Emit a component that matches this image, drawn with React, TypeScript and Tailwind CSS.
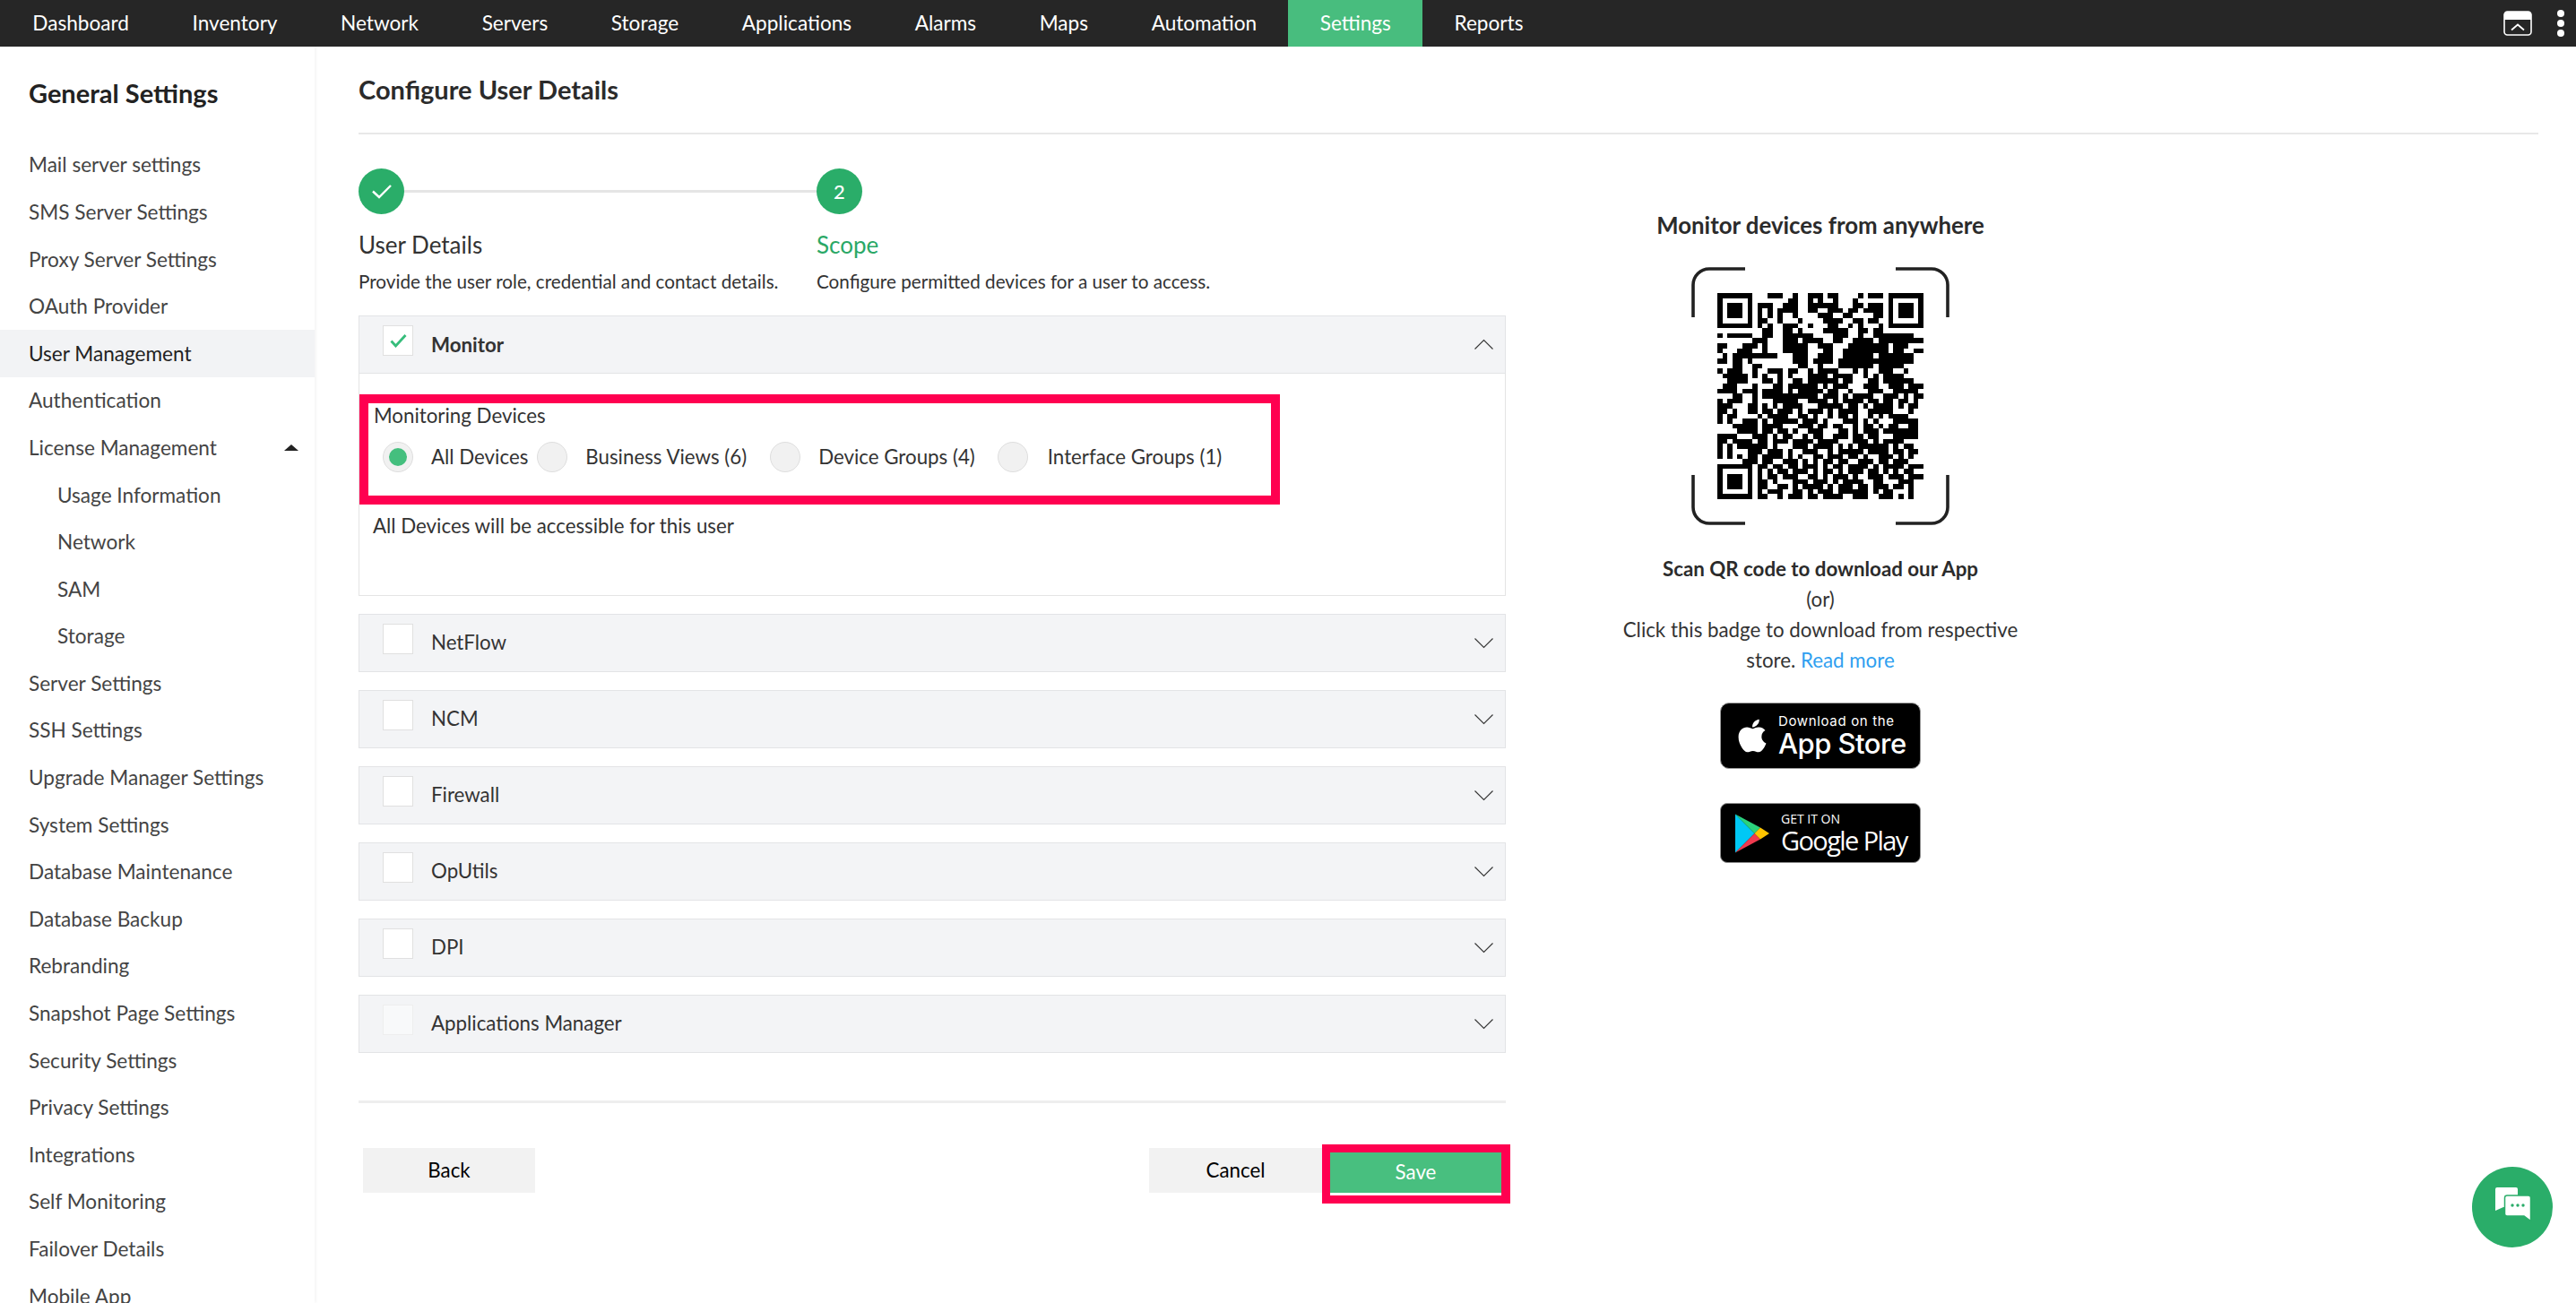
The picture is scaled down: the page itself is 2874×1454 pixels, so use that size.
import React from "react";
import { FaApple } from "react-icons/fa";

const navItems = ["Dashboard", "Inventory", "Network", "Servers", "Storage", "Applications", "Alarms", "Maps", "Automation", "Settings", "Reports"];

const sideItems: { label: string; sub?: boolean; active?: boolean; arrow?: boolean }[] = [
  { label: "Mail server settings" },
  { label: "SMS Server Settings" },
  { label: "Proxy Server Settings" },
  { label: "OAuth Provider" },
  { label: "User Management", active: true },
  { label: "Authentication" },
  { label: "License Management", arrow: true },
  { label: "Usage Information", sub: true },
  { label: "Network", sub: true },
  { label: "SAM", sub: true },
  { label: "Storage", sub: true },
  { label: "Server Settings" },
  { label: "SSH Settings" },
  { label: "Upgrade Manager Settings" },
  { label: "System Settings" },
  { label: "Database Maintenance" },
  { label: "Database Backup" },
  { label: "Rebranding" },
  { label: "Snapshot Page Settings" },
  { label: "Security Settings" },
  { label: "Privacy Settings" },
  { label: "Integrations" },
  { label: "Self Monitoring" },
  { label: "Failover Details" },
  { label: "Mobile App" },
];

const qrTop = [
  "..111..1..111.11....1.111.",
  "......11..1.1..1...1......",
  "111..111..111111...11.111.",
  "1.1.1111..11..111.11.1111.",
  "1.1.1..1....111..11....11.",
  "11..1...1....1111..11.11..",
  "1.1..111..1...11..1.1...1.",
  ".11..11.1....11111..11.11.",
];
const qrMid = [
  "1.11111..11..111111....111..1..11111111..",
  ".......111...111.1111..11..1111.111111111",
  "11...111.1...11111..111...11111111.111...",
  "1...111..1...11111...11..111111111.11..11",
  ".1.111111111...111..111..111111.1111111..",
  "11.11.1........111.1111.111111111111111..",
  "...11..11.......11..1...1111111.11111....",
  "1.111..1..111.11..1.1111...1.1..111..1...",
  ".11111.1.1..1.1...1111.1111..1.1.1111....",
  "..1111...11.1..11.111111.11...11.111111..",
  ".111...1...11.111111.1.111...111..111.111",
  "1111.111.1111.1.11111.11..1...111..11111.",
  "...11..1.11111111111.111.1.1111..111.1.11",
  "1.111..1...11111..1111.1.1111.11.11.11.1.",
  "111...11.1.1.1111...11111.11.1.1111.1.11.",
  "11.1..11.11.111.1.111.1.1111..11111...1..",
  "1.11....1.1111..11.1..1.11.1..1.1.1111...",
  "1.1..111.1.11111.111.1...111.1.1...11111.",
  "...11111.1111...111.11.11..1.11.1.11..11.",
  "....1111.11.11.1..111...11.1.111.1111111.",
  "1111...111.1.11..1.11..111.11.11...11111.",
  "11.1111.11.111.1111.1111...111.1.1111....",
  "1.1.111111.1...111.1111.1.1.111111.1.11..",
  "1.1...111.111.1..111..1.11111.1111.11.11.",
  "1.1.1.11.1111.1.1..11.111.11.1..111.1.1..",
  ".....111.11..111.1.1.11.11..111.11.111...",
];
const qrBottom = [
  "11.11.11.111.1.11.1111.1.1111.111",
  "1.1.11.111.1.11.1.111.11.1.1.11..",
  "1.11.111..11.1.111.1..111.111.111",
  "11.1...111.111.1.1111..11...111..",
  "11..11.1.1111.1.111.11.111.11.1..",
  "1.111..11.1.111.111111.1.11...1..",
  "11..1.111.11.1111..111..111.1.1..",
];

function qrPath() {
  const size = 41;
  const g: boolean[][] = Array.from({ length: size }, () => Array(size).fill(false));
  qrTop.forEach((r, y) => [...r].forEach((c, i) => { if (c === "1" && i + 8 < 33) g[y][i + 8] = true; }));
  qrMid.forEach((r, y) => [...r].forEach((c, x) => { if (c === "1" && x < size) g[y + 8][x] = true; }));
  qrBottom.forEach((r, y) => [...r].forEach((c, i) => { if (c === "1" && i + 8 < size) g[y + 34][i + 8] = true; }));
  const finder = (ox: number, oy: number) => {
    for (let y = 0; y < 7; y++) for (let x = 0; x < 7; x++) {
      const edge = x === 0 || y === 0 || x === 6 || y === 6;
      const core = x >= 2 && x <= 4 && y >= 2 && y <= 4;
      g[oy + y][ox + x] = edge || core;
    }
  };
  finder(0, 0);
  finder(34, 0);
  finder(0, 34);
  let d = "";
  g.forEach((row, y) => row.forEach((on, x) => { if (on) d += `M${x} ${y}h1v1h-1z`; }));
  return d;
}

function Chevron({ up }: { up?: boolean }) {
  return (
    <svg width="23" height="13" viewBox="0 0 23 13" fill="none" stroke="#333" strokeWidth="1.1">
      <path d={up ? "M1.5 11.5 L11.5 1.5 L21.5 11.5" : "M1.5 1.5 L11.5 11.5 L21.5 1.5"} />
    </svg>
  );
}

function Radio({ checked }: { checked?: boolean }) {
  return (
    <span className="w-[34px] h-[34px] shrink-0 rounded-full bg-[#f1f1f1] border border-[#dedede] flex items-center justify-center">
      {checked && <span className="w-[20px] h-[20px] rounded-full bg-[#44bf7e]" />}
    </span>
  );
}

function Checkbox({ checked, faint }: { checked?: boolean; faint?: boolean }) {
  return (
    <span className={`w-[34px] h-[34px] shrink-0 mt-[10px] border flex justify-center pt-[9px] ${faint ? "bg-[#f8f9fa] border-[#eeeeee]" : "bg-white border-[#e0e0e0]"}`}>
      {checked && (
        <svg width="19" height="15" viewBox="0 0 19 15" fill="none" stroke="#36bd7b" strokeWidth="2.8">
          <path d="M1.5 7.5 L6.5 13 L17.5 1" />
        </svg>
      )}
    </span>
  );
}

function AccordionRow({ label, faint }: { label: string; faint?: boolean }) {
  return (
    <div className="h-[65px] bg-[#f3f4f6] border border-[#e3e4e6] flex items-start pl-[26px] pr-[12px]">
      <Checkbox faint={faint} />
      <span className="ml-[20px] h-[63px] pb-[1px] flex items-center text-[22.3px] text-[#333]">{label}</span>
      <span className="ml-auto h-[63px] flex items-center"><Chevron /></span>
    </div>
  );
}

export default function App() {
  const qr = qrPath();
  return (
    <div className="relative h-[1454px] w-[2874px] overflow-hidden bg-white font-['Lato',sans-serif] text-[22.3px] text-[#333]">
      <header className="h-[52px] bg-[#262626] flex items-stretch pl-[1px]">
        {navItems.map((n) => (
          <div key={n} className={`px-[35.3px] flex items-center text-[22.6px] text-white ${n === "Settings" ? "bg-[#48bd7e]" : ""}`}>{n}</div>
        ))}
        <div className="ml-auto flex items-center gap-[28px] pr-[13px]">
          <svg width="32" height="28" viewBox="0 0 32 28" fill="none">
            <rect x="1" y="1" width="30" height="26" rx="3.5" stroke="#fff" strokeWidth="1.6" />
            <path d="M1 4.5 a3.5 3.5 0 0 1 3.5 -3.5 h23 a3.5 3.5 0 0 1 3.5 3.5 V10 H1z" fill="#fff" />
            <path d="M9 21.5 L16 15.5 L23 21.5" stroke="#fff" strokeWidth="1.8" />
          </svg>
          <div className="flex flex-col gap-[3px]">
            <span className="w-[8px] h-[8px] rounded-full bg-white" />
            <span className="w-[8px] h-[8px] rounded-full bg-white" />
            <span className="w-[8px] h-[8px] rounded-full bg-white" />
          </div>
        </div>
      </header>

      <div className="flex h-[1402px]">
        <aside className="w-[351px] shrink-0 shadow-[2px_0_3px_rgba(0,0,0,0.04)] pt-[32px]">
          <h2 className="px-[32px] h-[40px] leading-[40px] text-[29px] font-bold text-[#222]">General Settings</h2>
          <ul className="mt-[34px]">
            {sideItems.map((s) => (
              <li key={s.label + (s.sub ? "s" : "")} className={`h-[52.6px] flex items-center pr-[18px] text-[22.6px] ${s.sub ? "pl-[64px]" : "pl-[32px]"} ${s.active ? "bg-[#f2f3f5] text-[#222]" : "text-[#444]"}`}>
                <span>{s.label}</span>
                {s.arrow && <span className="ml-auto w-0 h-0 border-x-[8px] border-x-transparent border-b-[7px] border-b-[#222]" />}
              </li>
            ))}
          </ul>
        </aside>

        <main className="flex-1 pl-[49px] pr-[42px]">
          <div className="h-[98px] border-b-2 border-[#e8e8e8] pt-[28px]">
            <h1 className="text-[29px] leading-[40px] font-bold text-[#2b2b2b]">Configure User Details</h1>
          </div>

          <div className="flex items-start mt-[38px]">
            <section className="w-[1280px] shrink-0">
              <div className="flex">
                <div className="w-[511px]">
                  <div className="flex items-center h-[51px]">
                    <span className="w-[51px] h-[51px] shrink-0 rounded-full bg-[#2aad69] flex items-center justify-center">
                      <svg width="24" height="17" viewBox="0 0 24 17" fill="none" stroke="#fff" strokeWidth="2.4"><path d="M2 8.5 L9 15 L22 2" /></svg>
                    </span>
                    <span className="flex-1 h-[3px] bg-[#e5e5e5]" />
                  </div>
                  <div className="mt-[17px] h-[34px] leading-[34px] text-[26px] text-[#333]">User Details</div>
                  <div className="mt-[7px] h-[34px] leading-[34px] text-[20.7px] text-[#333]">Provide the user role, credential and contact details.</div>
                </div>
                <div>
                  <span className="w-[51px] h-[51px] rounded-full bg-[#2aad69] flex items-center justify-center text-white text-[22px] font-medium">2</span>
                  <div className="mt-[17px] h-[34px] leading-[34px] text-[26px] text-[#2aa866]">Scope</div>
                  <div className="mt-[7px] h-[34px] leading-[34px] text-[20.7px] text-[#333]">Configure permitted devices for a user to access.</div>
                </div>
              </div>

              <div className="mt-[21px]">
                <div className="h-[65px] bg-[#f3f4f6] border border-[#e3e4e6] flex items-start pl-[26px] pr-[12px]">
                  <Checkbox checked />
                  <span className="ml-[20px] h-[63px] flex items-center text-[22.3px] font-bold text-[#333]">Monitor</span>
                  <span className="ml-auto h-[63px] flex items-center"><Chevron up /></span>
                </div>
                <div className="h-[248px] border-x border-b border-[#e4e4e4] pt-[23px]">
                  <div className="w-[1027px] h-[123px] border-[10px] border-[#ff0050] pl-[6px]">
                    <div className="h-[28px] leading-[28px]">Monitoring Devices</div>
                    <div className="mt-[15px] flex items-center pl-[10px]">
                      <Radio checked />
                      <span className="ml-[20px] mr-[10px]">All Devices</span>
                      <Radio />
                      <span className="ml-[20px] mr-[26px]">Business Views (6)</span>
                      <Radio />
                      <span className="ml-[20px] mr-[25px]">Device Groups (4)</span>
                      <Radio />
                      <span className="ml-[22px]">Interface Groups (1)</span>
                    </div>
                  </div>
                  <div className="mt-[7px] pl-[15px] h-[34px] leading-[34px]">All Devices will be accessible for this user</div>
                </div>
              </div>

              <div className="mt-[20px] flex flex-col gap-[20px]">
                <AccordionRow label="NetFlow" />
                <AccordionRow label="NCM" />
                <AccordionRow label="Firewall" />
                <AccordionRow label="OpUtils" />
                <AccordionRow label="DPI" />
                <AccordionRow label="Applications Manager" faint />
              </div>

              <div className="mt-[53px] h-[3px] bg-[#eeeeee]" />

              <div className="mt-[46px] w-[1285px] flex items-start justify-between">
                <button className="ml-[5px] mt-[4px] w-[192px] h-[50px] bg-[#f2f2f2] text-black text-[22.3px]">Back</button>
                <div className="flex items-start">
                  <button className="mt-[4px] w-[193px] h-[50px] bg-[#f2f2f2] text-black text-[22.3px]">Cancel</button>
                  <div className="w-[210px] border-[9px] border-r-[10px] border-[#ff0050] bg-white">
                    <button className="block w-full h-[45px] bg-[#48bf7f] text-white text-[22.3px] pb-[2px]">Save</button>
                    <div className="h-[3px]" />
                  </div>
                </div>
              </div>
            </section>

            <section className="ml-[51px] w-[600px] shrink-0 flex flex-col items-center text-center">
              <h3 className="mt-[46px] h-[34px] leading-[34px] text-[25.8px] font-bold text-[#2b2b2b]">Monitor devices from anywhere</h3>
              <div className="relative mt-[30px] w-[288px] h-[288px] flex items-center justify-center">
                <svg className="absolute inset-0" width="288" height="288" viewBox="0 0 288 288" fill="none" stroke="#222" strokeWidth="3.6">
                  <path d="M2 56 V20 a18 18 0 0 1 18 -18 H60" />
                  <path d="M228 2 H268 a18 18 0 0 1 18 18 V56" />
                  <path d="M2 232 V268 a18 18 0 0 0 18 18 H60" />
                  <path d="M228 286 H268 a18 18 0 0 0 18 -18 V232" />
                </svg>
                <svg width="230" height="230" viewBox="0 0 41 41" shapeRendering="crispEdges"><path d={qr} fill="#000" /></svg>
              </div>
              <p className="mt-[32px] h-[34px] leading-[34px] font-bold text-[#2b2b2b]">Scan QR code to download our App</p>
              <p className="h-[34px] leading-[34px]">(or)</p>
              <p className="w-[460px] leading-[34px]">Click this badge to download from respective store. <span className="text-[#2f9ff0]">Read more</span></p>

              <div className="mt-[30px] w-[224px] h-[74px] rounded-[10px] bg-black border-[1.5px] border-[#9a9a9a] flex items-center pl-[17px] text-white text-left">
                <FaApple className="text-[#fff] w-[36px] h-[42px] shrink-0" />
                <div className="ml-[11px] font-['Inter',sans-serif]">
                  <div className="text-[15px] leading-[16px] tracking-[0.65px]">Download on the</div>
                  <div className="text-[31px] leading-[33px] font-medium tracking-[-0.5px]">App Store</div>
                </div>
              </div>

              <div className="mt-[38px] w-[224px] h-[67px] rounded-[8px] bg-black border-[1.5px] border-[#8f8f8f] flex items-center pl-[15px] text-white text-left">
                <svg width="40" height="46" viewBox="0 0 40 46" className="shrink-0">
                  <path d="M1 1.5 L1 44.5 L22.5 23z" fill="#00c8f5" />
                  <path d="M1 1.5 L22.5 23 L29 16.5z" fill="#2bd27c" />
                  <path d="M1 44.5 L22.5 23 L29 29.5z" fill="#ef3a4f" />
                  <path d="M29 16.5 L22.5 23 L29 29.5 L39 23z" fill="#ffc400" />
                </svg>
                <div className="ml-[12px] font-['Open_Sans',sans-serif]">
                  <div className="text-[14px] leading-[15px]">GET IT ON</div>
                  <div className="text-[29px] leading-[33px] tracking-[-1.6px]">Google Play</div>
                </div>
              </div>
            </section>
          </div>
        </main>
      </div>

      <div className="absolute right-[26px] bottom-[62px] w-[90px] h-[90px] rounded-full bg-[#2aad69]">
        <svg width="90" height="90" viewBox="0 0 90 90">
          <path d="M28 23 H49 a2 2 0 0 1 2 2 V45 H35 L26 49 V25 a2 2 0 0 1 2 -2z" fill="#fff" />
          <path d="M39 32 H63 a2.5 2.5 0 0 1 2.5 2.5 V60.5 L58 55 H39 a2.5 2.5 0 0 1 -2.5 -2.5 V34.5 a2.5 2.5 0 0 1 2.5 -2.5z" fill="#fff" stroke="#2aad69" strokeWidth="1.5" />
          <circle cx="45" cy="43" r="1.7" fill="#2aad69" />
          <circle cx="51" cy="43" r="1.7" fill="#2aad69" />
          <circle cx="57" cy="43" r="1.7" fill="#2aad69" />
        </svg>
      </div>
    </div>
  );
}
